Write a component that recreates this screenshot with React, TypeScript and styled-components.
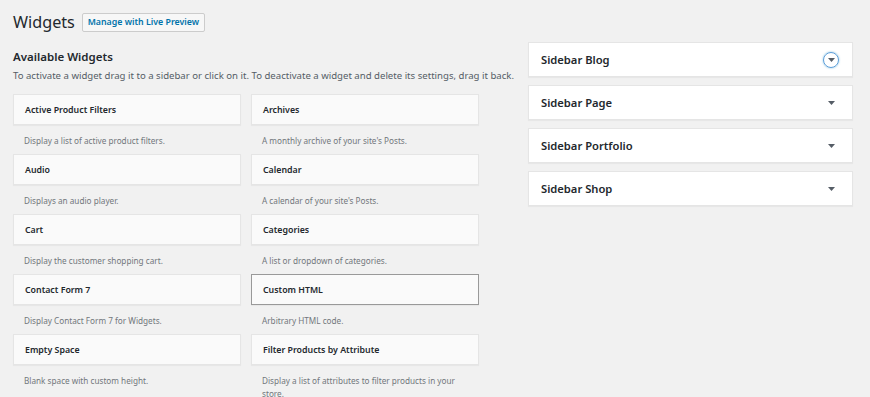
import React from 'react';
import styled, { createGlobalStyle } from 'styled-components';

interface widget {
  title: string;
  desc: string;
  active?: boolean;
}

const widgets: widget[] = [
  { title: 'Active Product Filters', desc: 'Display a list of active product filters.' },
  { title: 'Archives', desc: "A monthly archive of your site's Posts." },
  { title: 'Audio', desc: 'Displays an audio player.' },
  { title: 'Calendar', desc: "A calendar of your site's Posts." },
  { title: 'Cart', desc: 'Display the customer shopping cart.' },
  { title: 'Categories', desc: 'A list or dropdown of categories.' },
  { title: 'Contact Form 7', desc: 'Display Contact Form 7 for Widgets.' },
  { title: 'Custom HTML', desc: 'Arbitrary HTML code.', active: true },
  { title: 'Empty Space', desc: 'Blank space with custom height.' },
  {
    title: 'Filter Products by Attribute',
    desc: 'Display a list of attributes to filter products in your store.',
  },
];

const sidebars: string[] = ['Sidebar Blog', 'Sidebar Page', 'Sidebar Portfolio', 'Sidebar Shop'];

const Arrow = () => (
  <svg width="7" height="4" viewBox="0 0 7 4">
    <path d="M0 0 L7 0 L3.5 4 Z" fill="#555d66" />
  </svg>
);

const App = () => {
  return (
    <>
      <GlobalStyle />
      <Page>
        <Header>
          <Title>Widgets</Title>
          <PreviewButton>Manage with Live Preview</PreviewButton>
        </Header>
        <Columns>
          <Available>
            <SectionTitle>Available Widgets</SectionTitle>
            <Hint>
              To activate a widget drag it to a sidebar or click on it. To deactivate a widget and
              delete its settings, drag it back.
            </Hint>
            <WidgetGrid>
              {widgets.map((item) => (
                <WidgetItem key={item.title}>
                  <WidgetBox $active={item.active}>{item.title}</WidgetBox>
                  <WidgetDesc>{item.desc}</WidgetDesc>
                </WidgetItem>
              ))}
            </WidgetGrid>
          </Available>
          <Sidebars>
            {sidebars.map((name, i) => (
              <SidebarBox key={name}>
                <SidebarName>{name}</SidebarName>
                <Toggle $focus={i === 0}>
                  <Arrow />
                </Toggle>
              </SidebarBox>
            ))}
          </Sidebars>
        </Columns>
      </Page>
    </>
  );
};

export default App;

const GlobalStyle = createGlobalStyle`
  body {
    margin: 0;
    background: #f1f1f1;
    font-family: "Noto Sans", "Open Sans", sans-serif;
    color: #23282d;
  }
`;

const Page = styled.div`
  padding: 9px 17px 0 13px;
  height: 397px;
  box-sizing: border-box;
  overflow: hidden;
`;

const Header = styled.div`
  display: flex;
  align-items: center;
  gap: 7px;
  height: 26px;
`;

const Title = styled.h1`
  margin: 0;
  font-size: 16.2px;
  font-weight: 400;
  color: #23282d;
`;

const PreviewButton = styled.button`
  height: 19px;
  width: 123px;
  padding: 0;
  background: #f7f7f7;
  border: 1px solid #cccccc;
  border-radius: 2px;
  color: #0073aa;
  font-family: inherit;
  font-size: 8.8px;
  font-weight: 600;
`;

const Columns = styled.div`
  display: flex;
  gap: 49px;
  margin-top: 7px;
`;

const Available = styled.div`
  width: 466px;
`;

const SectionTitle = styled.h2`
  margin: 7px 0 0;
  font-size: 11.5px;
  font-weight: 600;
  line-height: 16px;
`;

const Hint = styled.p`
  margin: 4px 0 0;
  font-size: 9.6px;
  line-height: 14px;
  color: #555d66;
  white-space: nowrap;
`;

const WidgetGrid = styled.div`
  display: grid;
  grid-template-columns: 228px 228px;
  column-gap: 10px;
  margin-top: 11px;
`;

const WidgetItem = styled.div`
  height: 60px;
`;

const WidgetBox = styled.div<{ $active?: boolean }>`
  height: 31px;
  box-sizing: border-box;
  padding-left: 11px;
  display: flex;
  align-items: center;
  background: #fafafa;
  border: 1px solid ${(p) => (p.$active ? '#999999' : '#e5e5e5')};
  box-shadow: 0 1px 1px rgba(0, 0, 0, 0.04);
  font-size: 8.8px;
  font-weight: 600;
  color: #23282d;
`;

const WidgetDesc = styled.div`
  padding: 9px 14px 0 11px;
  font-size: 8.2px;
  line-height: 13px;
  color: #72777c;
`;

const Sidebars = styled.div`
  width: 325px;
  display: flex;
  flex-direction: column;
  gap: 8px;
`;

const SidebarBox = styled.div`
  height: 35px;
  box-sizing: border-box;
  background: #ffffff;
  border: 1px solid #e5e5e5;
  box-shadow: 0 1px 1px rgba(0, 0, 0, 0.04);
  display: flex;
  align-items: center;
  justify-content: space-between;
  padding: 0 13px 0 12px;
`;

const SidebarName = styled.div`
  font-size: 11.2px;
  font-weight: 600;
  color: #23282d;
`;

const Toggle = styled.div<{ $focus?: boolean }>`
  width: 16px;
  height: 16px;
  border-radius: 50%;
  display: flex;
  align-items: center;
  justify-content: center;
  box-sizing: border-box;
  border: 1px solid ${(p) => (p.$focus ? '#5b9dd9' : 'transparent')};
  box-shadow: ${(p) => (p.$focus ? '0 0 2px rgba(30, 140, 190, 0.6)' : 'none')};
`;
